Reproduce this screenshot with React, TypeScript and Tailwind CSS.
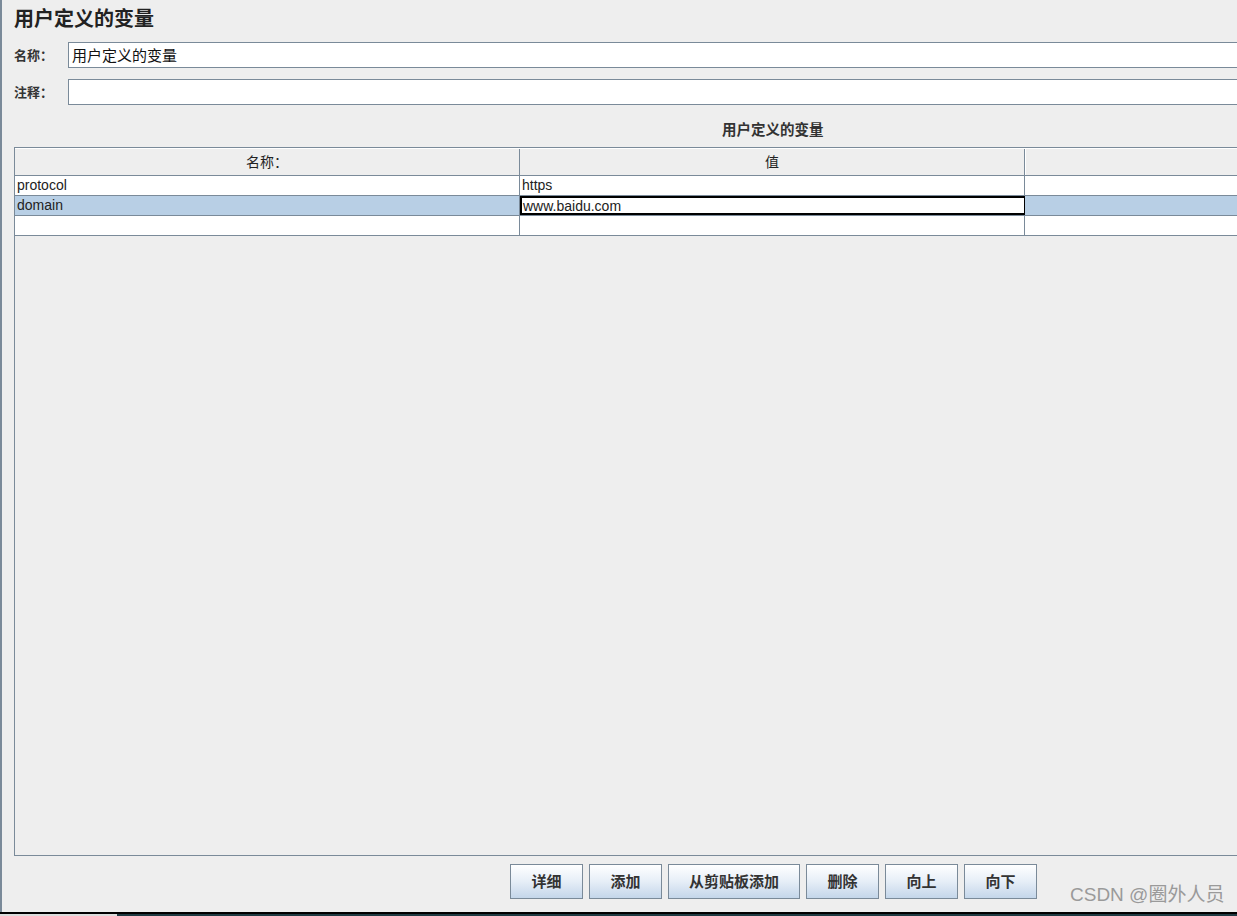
const cjk = { fontFamily: '"Noto Sans CJK SC", "Liberation Sans", sans-serif' };
const latin = { fontFamily: '"Liberation Sans", "Noto Sans CJK SC", sans-serif' };

const rows = [
  { name: "protocol", value: "https" },
  { name: "domain", value: "www.baidu.com", selected: true },
  { name: "", value: "" },
];

const buttons = [
  { label: "详细", w: "w-[73px]" },
  { label: "添加", w: "w-[73px]" },
  { label: "从剪贴板添加", w: "w-[132px]" },
  { label: "删除", w: "w-[73px]" },
  { label: "向上", w: "w-[73px]" },
  { label: "向下", w: "w-[73px]" },
];

export default function App() {
  return (
    <div className="w-[1237px] h-[916px] overflow-hidden bg-[#eeeeee] flex flex-col relative">
      <div className="flex-1 flex flex-col border-l-2 border-[#7a8a99] min-h-0">
        <div className="h-[38px] pl-[12px] pt-[3px] text-[20px] font-bold text-[#222]" style={cjk}>
          用户定义的变量
        </div>

        <div className="flex items-center h-[26px] mt-[4px]">
          <span className="w-[66px] shrink-0 pl-[12px] text-[13px] font-bold text-[#333]" style={cjk}>名称：</span>
          <div className="flex-1 h-[26px] bg-white border border-[#7a8a99] border-r-0 flex items-center pl-[3px] text-[15px] text-[#111]" style={cjk}>
            用户定义的变量
          </div>
        </div>
        <div className="flex items-center h-[26px] mt-[11px]">
          <span className="w-[66px] shrink-0 pl-[12px] text-[13px] font-bold text-[#333]" style={cjk}>注释：</span>
          <div className="flex-1 h-[26px] bg-white border border-[#7a8a99] border-r-0" />
        </div>

        <div className="h-[42px] pl-[720px] pt-[13px] text-[14.5px] font-bold text-[#333]" style={cjk}>
          用户定义的变量
        </div>

        <div className="ml-[12px] h-[710px] border-t border-l border-b border-[#7a8a99] flex flex-col">
          <div className="flex h-[28px] border-t border-white border-b border-b-[#7a8a99]">
            <div className="w-[505px] flex items-center justify-center text-[14px] text-[#222] border-r border-[#7a8a99]" style={cjk}>名称：</div>
            <div className="w-[505px] flex items-center justify-center text-[14px] text-[#222] border-r border-[#7a8a99]" style={cjk}>值</div>
            <div className="flex-1 border-l border-white" />
          </div>
          {rows.map((r, i) => (
            <div
              key={i}
              className={`flex h-[20px] border-b border-[#7a8a99] text-[14px] text-[#222] ${r.selected ? "bg-[#b8cfe5]" : "bg-white"}`}
              style={latin}
            >
              <div className="w-[505px] pl-[2px] leading-[19px] border-r border-[#7a8a99]">{r.name}</div>
              <div className={`w-[505px] border-r border-[#7a8a99] ${r.selected ? "bg-white border-2 border-black leading-[17px] pl-[1px]" : "pl-[2px] leading-[19px]"}`}>
                {r.value}
              </div>
              <div className="flex-1" />
            </div>
          ))}
          <div className="flex-1" />
        </div>

        <div className="flex items-start h-[56px] pl-[508px] pt-[8px] gap-[6px]">
          {buttons.map((b) => (
            <div
              key={b.label}
              className={`${b.w} h-[35px] flex items-center justify-center border border-[#7a8a99] bg-gradient-to-b from-white via-[#e6eef7] to-[#c4d6ea] text-[15px] font-bold text-[#333]`}
              style={cjk}
            >
              {b.label}
            </div>
          ))}
        </div>
      </div>

      <div className="h-[2px] bg-black" />
      <div className="h-[2px] flex">
        <div className="w-[117px] bg-[#dcdcdc]" />
        <div className="flex-1 bg-[#1f3a42]" />
      </div>

      <div className="absolute left-[1070px] top-[881px] text-[19px] text-[#9a9a9a]" style={latin}>
        CSDN @圈外人员
      </div>
    </div>
  );
}
